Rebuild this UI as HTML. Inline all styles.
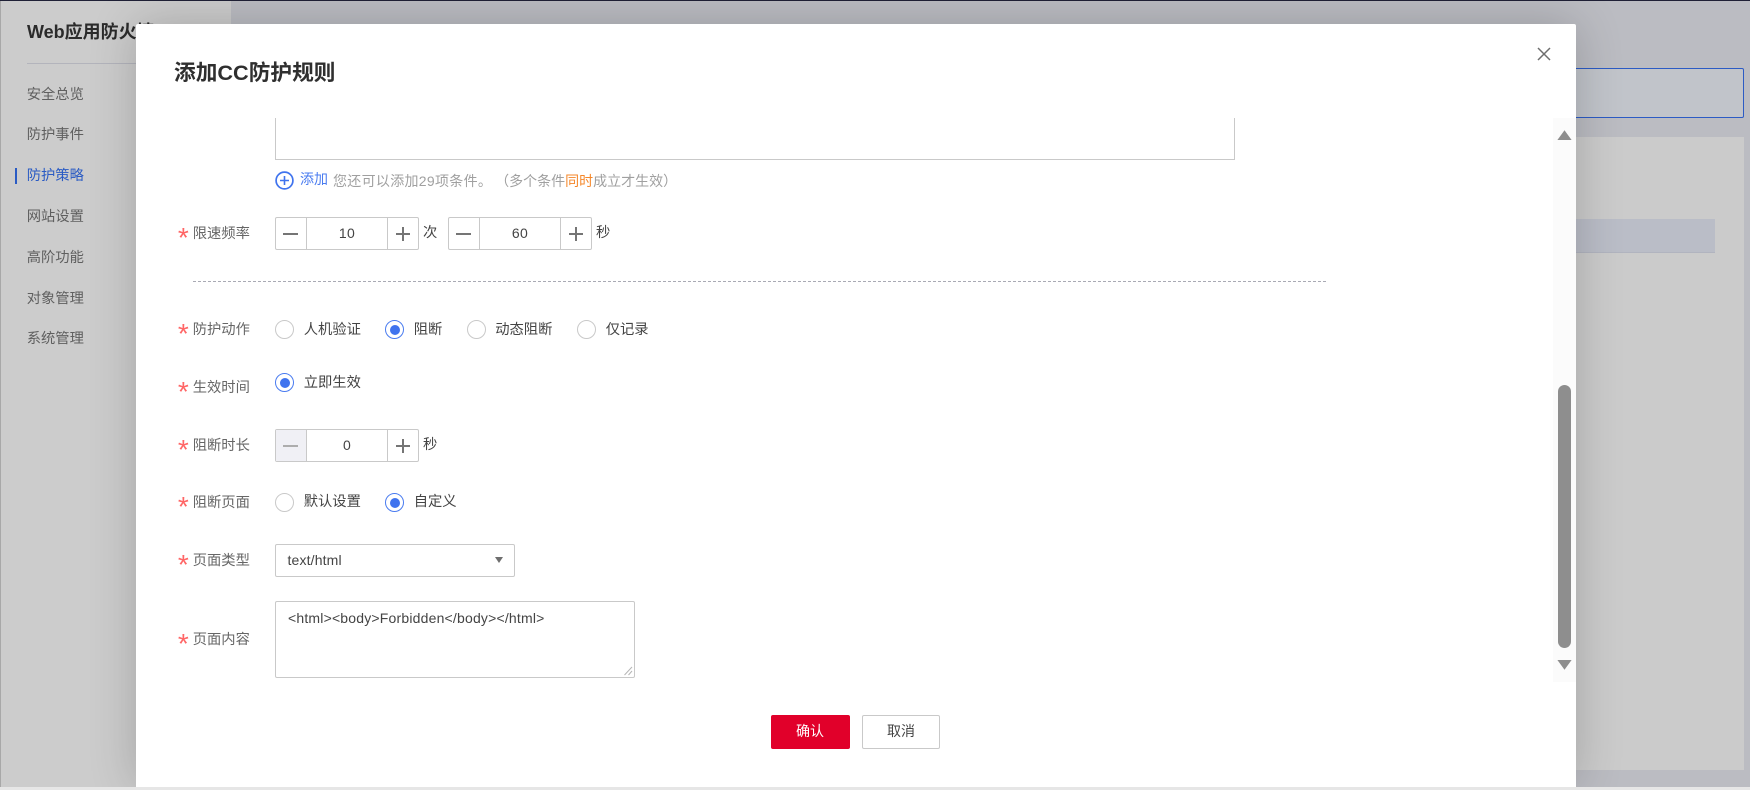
<!DOCTYPE html>
<html lang="zh"><head><meta charset="utf-8"><title>添加CC防护规则</title>
<style>
html,body{margin:0;padding:0;width:1750px;height:790px;overflow:hidden;background:#bbbcc2}
body{position:relative;font-family:"Liberation Sans","Noto Sans CJK SC",sans-serif;font-size:14px;color:#252b3a;text-spacing-trim:space-all}
.a{position:absolute;box-sizing:border-box}
.t{position:absolute;white-space:nowrap;line-height:20px;height:20px}
.nav{left:26.7px;color:#5f5f5f;font-size:14.3px;margin-top:1px}
.lb{left:192.7px;color:#666;font-size:14.3px;margin-top:1px}
.st{position:absolute;left:177.9px;font:28px/28px "Liberation Sans",sans-serif;color:#f66;height:28px;white-space:nowrap}
.stepper{position:absolute;box-sizing:border-box;height:33px;width:144px;border:1px solid #c9c9c9;border-radius:2px;background:#fff}
.stepper .d1,.stepper .d2{position:absolute;top:0;bottom:0;width:1px;background:#c9c9c9}
.stepper .d1{left:30px}.stepper .d2{left:111px}
.stepper .v{position:absolute;left:31px;width:80px;top:0;line-height:31px;text-align:center;color:#444;letter-spacing:.3px}
.stepper svg{position:absolute;top:7px}
.r{position:absolute;box-sizing:border-box;width:19px;height:19px;border-radius:50%;border:1px solid #c9c9c9;background:#fff}
.r.on{border-color:#4a7cf0}
.r.on:after{content:"";position:absolute;left:3.5px;top:3.5px;width:10px;height:10px;border-radius:50%;background:#3f73ee}
.rt{color:#444;font-size:14.3px;margin-top:1px}
</style></head>
<body>
<div class="a" style="left:0;top:0;width:1750px;height:1px;background:#1f2036"></div>

<!-- sidebar -->
<div class="a" style="left:0;top:1px;width:231px;height:786px;background:#ccc;border-left:1px solid #a8a8a8"></div>
<div class="t" style="left:27px;top:21px;height:22px;line-height:22px;font-size:18px;font-weight:700;color:#2b2b2b">Web应用防火墙</div>
<div class="a" style="left:27px;top:63px;width:190px;height:1px;background:#b3b4bc"></div>
<div class="t nav" style="top:84px">安全总览</div>
<div class="t nav" style="top:124px">防护事件</div>
<div class="t nav" style="top:165px;color:#2a5bc4">防护策略</div>
<div class="a" style="left:15px;top:168px;width:2px;height:16px;background:#2a5bc4"></div>
<div class="t nav" style="top:206px">网站设置</div>
<div class="t nav" style="top:247px">高阶功能</div>
<div class="t nav" style="top:288px">对象管理</div>
<div class="t nav" style="top:328px">系统管理</div>

<!-- main background -->
<div class="a" style="left:1000px;top:68px;width:744px;height:50px;background:#c1c4ca;border:1px solid #2c5bc4;border-radius:2px"></div>
<div class="a" style="left:1000px;top:137px;width:744px;height:633px;background:#cbcbcb"></div>
<div class="a" style="left:1000px;top:219px;width:715px;height:34px;background:#babdc7;border-bottom:1px solid #b1b4bf"></div>

<!-- modal -->
<div class="a" style="left:136px;top:24px;width:1440px;height:763px;background:#fff;border-radius:2px 2px 0 0;box-shadow:0 0 48px rgba(0,0,0,.2)"></div>
<div class="a" style="left:0;top:787px;width:1750px;height:3px;background:#e6e6e6"></div>
<div class="t" style="left:174px;top:59px;height:28px;line-height:28px;font-size:21.7px;font-weight:700;color:#2f2f2f">添加CC防护规则</div>
<svg class="a" style="left:1537px;top:47px" width="14" height="14" viewBox="0 0 14 14"><path d="M1 1L13 13M13 1L1 13" stroke="#6e6e6e" stroke-width="1.5" fill="none"/></svg>

<!-- scrollbar -->
<div class="a" style="left:1553px;top:118px;width:23px;height:564px;background:#fbfbfb"></div>
<svg class="a" style="left:1557px;top:130px" width="15" height="10" viewBox="0 0 15 10"><path d="M7.5 0.3L14.6 10H.4Z" fill="#8e8e8e"/></svg>
<div class="a" style="left:1558px;top:385px;width:13px;height:263px;background:#8e8e8e;border-radius:6.5px"></div>
<svg class="a" style="left:1557px;top:660px" width="15" height="10" viewBox="0 0 15 10"><path d="M.4 0H14.6L7.5 9.7Z" fill="#8e8e8e"/></svg>

<!-- clipped textarea -->
<div class="a" style="left:275px;top:118px;width:960px;height:42px;background:#fff;border:1px solid #c9c9c9;border-top:0"></div>

<!-- add -->
<svg class="a" style="left:275px;top:171px" width="19" height="19" viewBox="0 0 19 19"><circle cx="9.5" cy="9.5" r="8.4" fill="none" stroke="#3f73ee" stroke-width="1.7"/><path d="M9.5 5V14M5 9.5H14" stroke="#3f73ee" stroke-width="1.6"/></svg>
<div class="t" style="left:300px;top:169px;color:#4a7cf0">添加</div>
<div class="t" style="left:333px;top:171px;color:#a0a0a0"><span style="letter-spacing:.3px">您还可以添加29项条件。</span><span style="margin-left:3px">（多个条件</span><span style="color:#f5872a">同时</span>成立才生效）</div>

<!-- rate -->
<div class="st" style="top:224px">*</div>
<div class="t lb" style="top:223px">限速频率</div>
<div class="stepper" style="left:275px;top:217px"><div class="d1"></div><div class="d2"></div><div class="v">10</div>
<svg style="left:7px" width="16" height="18" viewBox="0 0 16 18"><path d="M0 9H15" stroke="#757575" stroke-width="2"/></svg>
<svg style="left:119px" width="16" height="18" viewBox="0 0 16 18"><path d="M1 9H15M8 2V16" stroke="#757575" stroke-width="2"/></svg></div>
<div class="t rt" style="left:423px;top:222px">次</div>
<div class="stepper" style="left:448px;top:217px"><div class="d1"></div><div class="d2"></div><div class="v">60</div>
<svg style="left:7px" width="16" height="18" viewBox="0 0 16 18"><path d="M0 9H15" stroke="#757575" stroke-width="2"/></svg>
<svg style="left:119px" width="16" height="18" viewBox="0 0 16 18"><path d="M1 9H15M8 2V16" stroke="#757575" stroke-width="2"/></svg></div>
<div class="t rt" style="left:596px;top:222px">秒</div>

<div class="a" style="left:193px;top:281px;width:1133px;height:1px;border-top:1px dashed #a9aab4"></div>

<!-- action -->
<div class="st" style="top:320px">*</div>
<div class="t lb" style="top:319px">防护动作</div>
<div class="r" style="left:275px;top:320px"></div><div class="t rt" style="left:303.7px;top:319px">人机验证</div>
<div class="r on" style="left:385px;top:320px"></div><div class="t rt" style="left:413.7px;top:319px">阻断</div>
<div class="r" style="left:467px;top:320px"></div><div class="t rt" style="left:495.2px;top:319px">动态阻断</div>
<div class="r" style="left:577px;top:320px"></div><div class="t rt" style="left:605.7px;top:319px">仅记录</div>

<!-- effective -->
<div class="st" style="top:378px">*</div>
<div class="t lb" style="top:377px">生效时间</div>
<div class="r on" style="left:275px;top:373px"></div><div class="t rt" style="left:303.7px;top:372px">立即生效</div>

<!-- duration -->
<div class="st" style="top:436px">*</div>
<div class="t lb" style="top:435px">阻断时长</div>
<div class="stepper" style="left:275px;top:429px"><div class="a" style="left:0;top:0;width:30px;height:31px;background:#f0f0f5"></div><div class="d1"></div><div class="d2"></div><div class="v">0</div>
<svg style="left:7px" width="16" height="18" viewBox="0 0 16 18"><path d="M0 9H15" stroke="#adadad" stroke-width="2"/></svg>
<svg style="left:119px" width="16" height="18" viewBox="0 0 16 18"><path d="M1 9H15M8 2V16" stroke="#757575" stroke-width="2"/></svg></div>
<div class="t rt" style="left:423px;top:434px">秒</div>

<!-- block page -->
<div class="st" style="top:493px">*</div>
<div class="t lb" style="top:492px">阻断页面</div>
<div class="r" style="left:275px;top:493px"></div><div class="t rt" style="left:303.7px;top:491px">默认设置</div>
<div class="r on" style="left:385px;top:493px"></div><div class="t rt" style="left:413.7px;top:491px">自定义</div>

<!-- type -->
<div class="st" style="top:551px">*</div>
<div class="t lb" style="top:550px">页面类型</div>
<div class="a" style="left:275px;top:544px;width:240px;height:33px;border:1px solid #c9c9c9;border-radius:2px;background:#fff"></div>
<div class="t" style="left:287.5px;top:550px;color:#444;letter-spacing:.15px">text/html</div>
<svg class="a" style="left:495px;top:557px" width="8" height="6" viewBox="0 0 8 6"><path d="M0 0H8L4 6Z" fill="#6e6e6e"/></svg>

<!-- content -->
<div class="st" style="top:630px">*</div>
<div class="t lb" style="top:629px">页面内容</div>
<div class="a" style="left:275px;top:601px;width:360px;height:77px;border:1px solid #c9c9c9;border-radius:2px;background:#fff"></div>
<div class="t" style="left:288px;top:608px;color:#444;letter-spacing:.19px">&lt;html&gt;&lt;body&gt;Forbidden&lt;/body&gt;&lt;/html&gt;</div>
<svg class="a" style="left:624px;top:666px" width="9" height="10" viewBox="0 0 9 10"><path d="M0.5 9L8 1M4.5 9L8 5" stroke="#b5b5b5" stroke-width="1" fill="none"/></svg>

<!-- buttons -->
<div class="a" style="left:771px;top:715px;width:79px;height:34px;background:#e1002a;border-radius:2px;color:#fff;text-align:center;line-height:33px;padding-right:1px">确认</div>
<div class="a" style="left:862px;top:715px;width:78px;height:34px;background:#fff;border:1px solid #c9c9c9;border-radius:2px;color:#444;text-align:center;line-height:31px">取消</div>
</body></html>
